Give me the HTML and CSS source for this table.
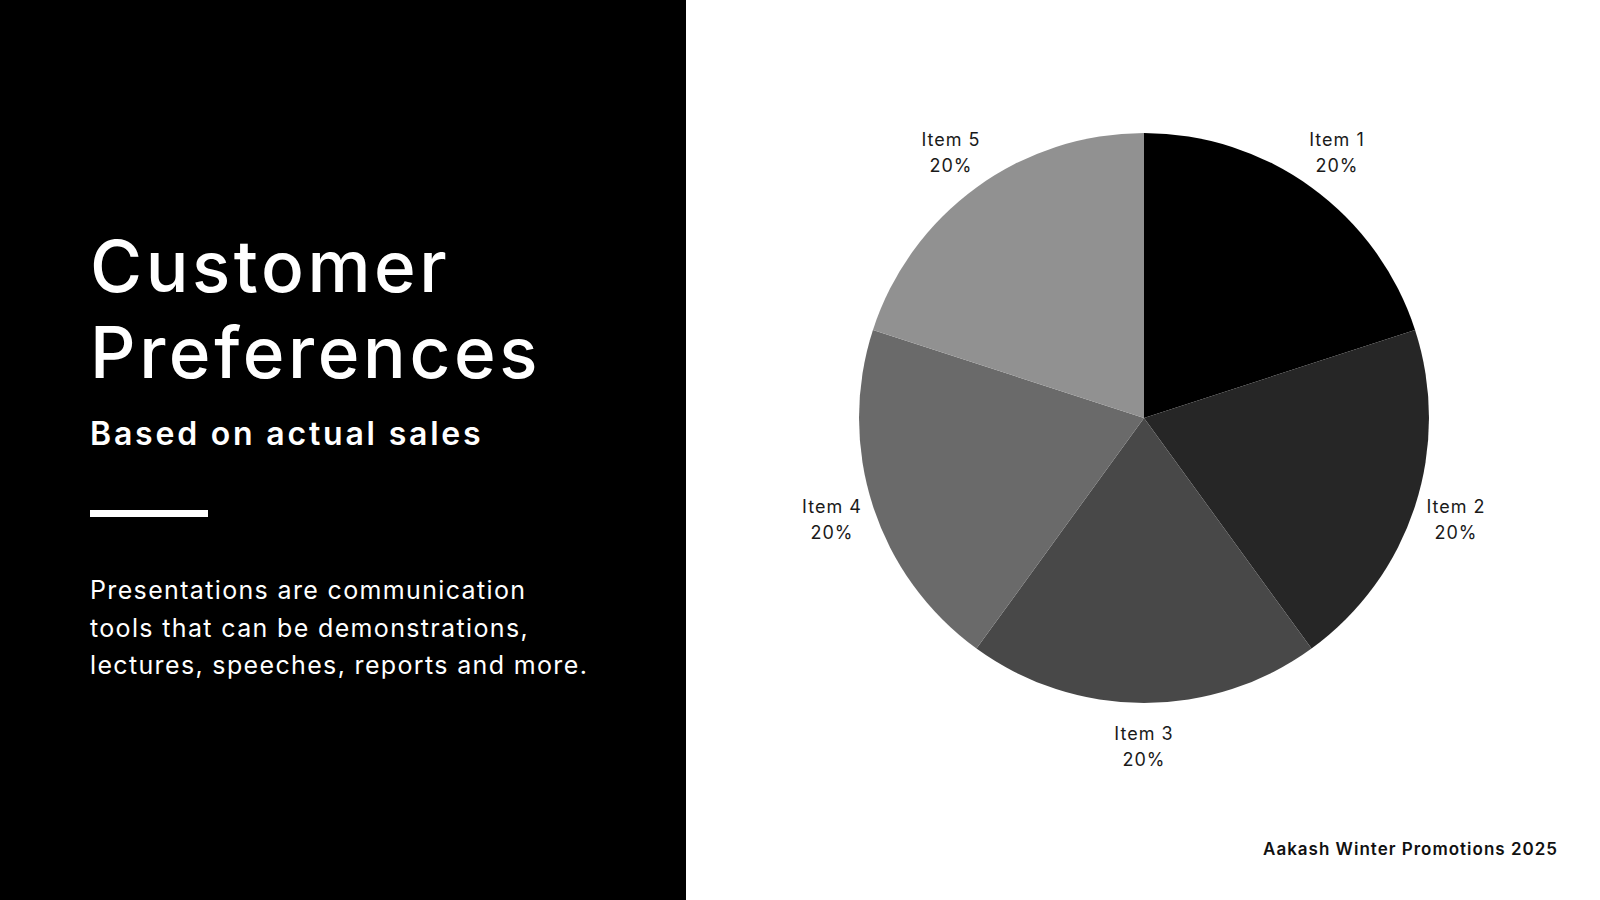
FILE: index.html
```html
<!DOCTYPE html>
<html lang="en">
<head>
<meta charset="utf-8">
<title>Customer Preferences</title>
<link rel="stylesheet" href="styles.css">
</head>
<body>
<div class="slide">
  <section class="side">
    <h1 class="title">Customer<br>Preferences</h1>
    <h2 class="subtitle">Based on actual sales</h2>
    <div class="rule"></div>
    <p class="body">Presentations are communication<br>tools that can be demonstrations,<br>lectures, speeches, reports and more.</p>
  </section>
  <section class="main">
    <svg class="chart" width="914" height="800" viewBox="0 0 914 800" xmlns="http://www.w3.org/2000/svg">
      <path class="s1" d="M458 418 L458 133 A285 285 0 0 1 729.05 329.93 Z"/>
      <path class="s2" d="M458 418 L729.05 329.93 A285 285 0 0 1 625.52 648.57 Z"/>
      <path class="s3" d="M458 418 L625.52 648.57 A285 285 0 0 1 290.48 648.57 Z"/>
      <path class="s4" d="M458 418 L290.48 648.57 A285 285 0 0 1 186.95 329.93 Z"/>
      <path class="s5" d="M458 418 L186.95 329.93 A285 285 0 0 1 458 133 Z"/>
      <g class="labels">
        <text x="651" y="146">Item 1</text><text x="651" y="172">20%</text>
        <text x="770" y="513">Item 2</text><text x="770" y="539">20%</text>
        <text x="458" y="739.5">Item 3</text><text x="458" y="765.5">20%</text>
        <text x="146" y="513">Item 4</text><text x="146" y="539">20%</text>
        <text x="265" y="146">Item 5</text><text x="265" y="172">20%</text>
      </g>
    </svg>
    <div class="footer">Aakash Winter Promotions 2025</div>
  </section>
</div>
</body>
</html>
```

FILE: styles.css
```css
html, body {
  margin: 0;
  padding: 0;
  background: #ffffff;
}

.slide {
  display: flex;
  width: 1600px;
  height: 900px;
  overflow: hidden;
  font-family: Inter, "Open Sans", "Liberation Sans", sans-serif;
}

.side {
  width: 686px;
  flex: none;
  background: #000000;
  color: #ffffff;
  box-sizing: border-box;
  padding: 223px 0 0 90px;
  display: flex;
  flex-direction: column;
  align-items: flex-start;
}

.title {
  margin: 0;
  font-size: 71px;
  line-height: 86px;
  font-weight: 500;
  letter-spacing: 3.6px;
}

.subtitle {
  margin: 19px 0 0;
  font-size: 32px;
  line-height: 40px;
  font-weight: 600;
  letter-spacing: 2.8px;
}

.rule {
  margin-top: 56px;
  width: 118px;
  height: 7px;
  background: #ffffff;
}

.body {
  margin: 55px 0 0;
  font-size: 25px;
  line-height: 37.5px;
  font-weight: 400;
  letter-spacing: 1.35px;
}

.main {
  flex: 1;
  display: flex;
  flex-direction: column;
  background: #ffffff;
}

.chart {
  display: block;
  flex: none;
}

.s1 { fill: #000000; }
.s2 { fill: #262626; }
.s3 { fill: #484848; }
.s4 { fill: #6a6a6a; }
.s5 { fill: #919191; }

.labels text {
  font-family: Inter, "Open Sans", "Liberation Sans", sans-serif;
  font-size: 18px;
  letter-spacing: 1px;
  fill: #1a1a1a;
  text-anchor: middle;
}

.footer {
  margin-top: auto;
  align-self: flex-end;
  padding: 0 42px 41px 0;
  font-size: 17px;
  line-height: 20px;
  font-weight: 600;
  letter-spacing: 1px;
  color: #111111;
}
```
